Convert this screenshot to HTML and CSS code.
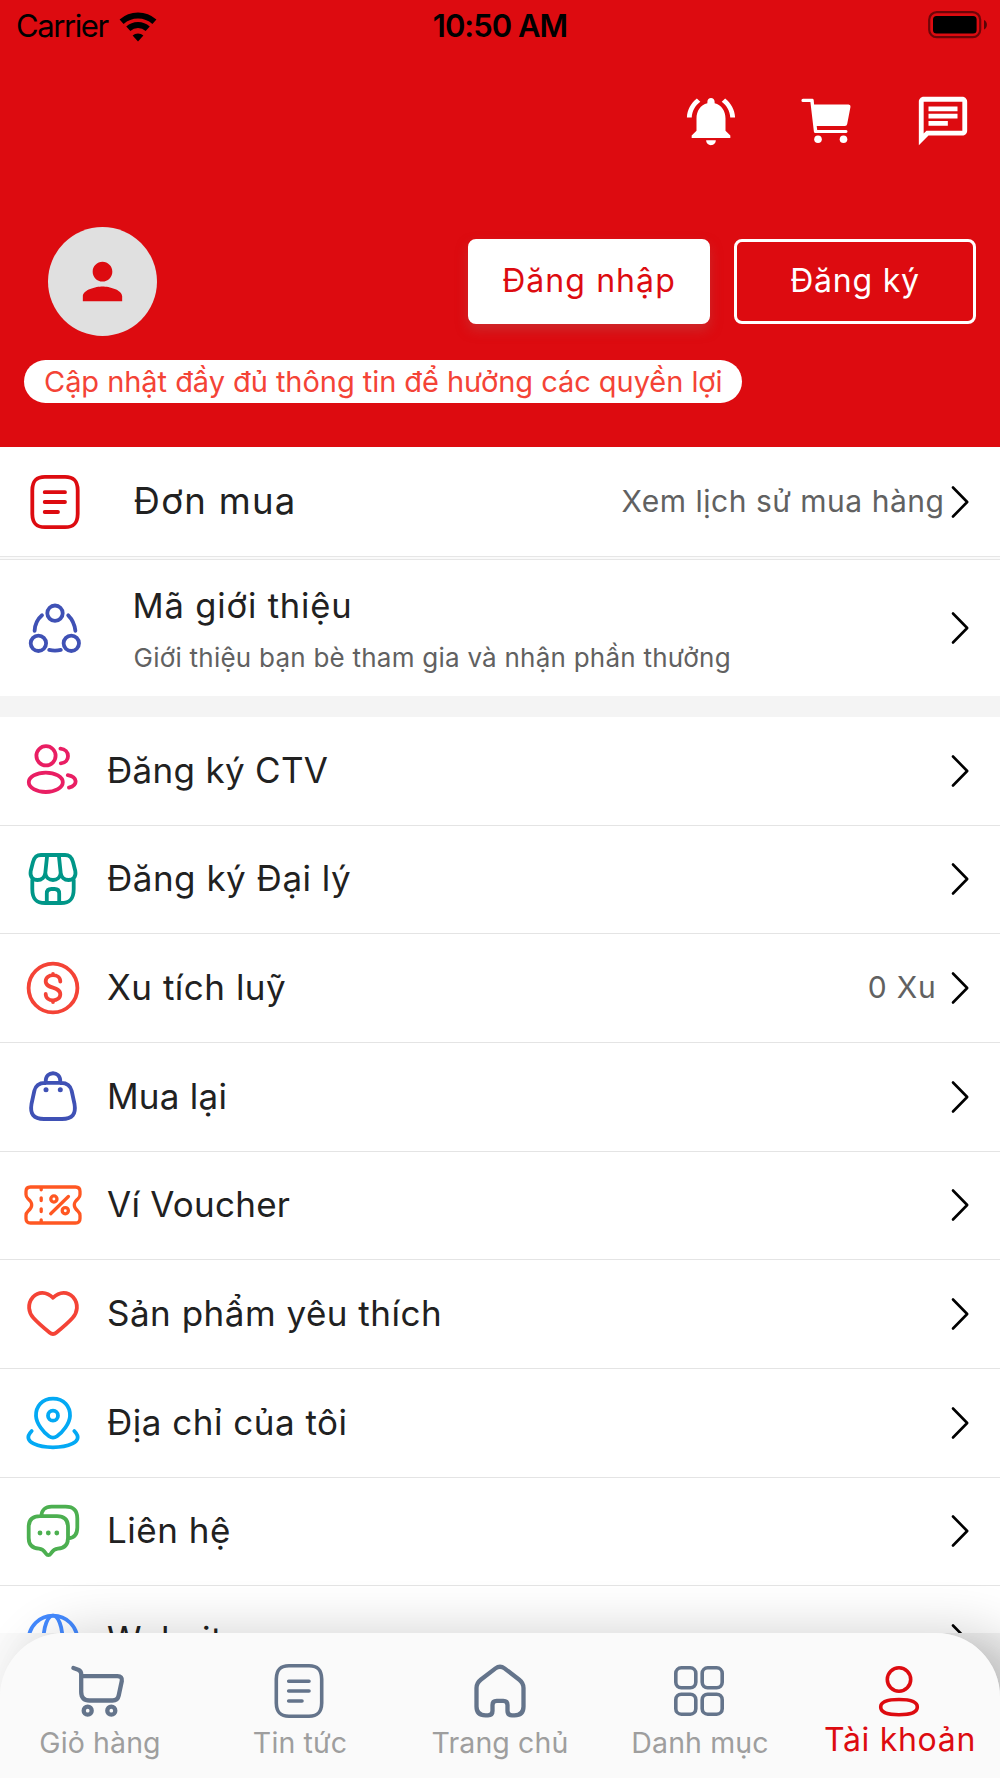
FILE: index.html
```html
<!DOCTYPE html>
<html lang="vi">
<head>
<meta charset="utf-8">
<title>Tài khoản</title>
<link rel="stylesheet" href="styles.css">
</head>
<body>
<svg class="defs" aria-hidden="true">
  <symbol id="chevron" viewBox="0 0 20 34"><path d="M3 2.5 17.2 17 3 31.5"/></symbol>
  <symbol id="doc" viewBox="-30 -30 60 60"><path d="M-10-25.2H10C20-25.2 22.5-20 22.7-12V12C22.5 20 20 25.2 10 25.2H-10C-20 25.2-22.5 20-22.7 12V-12C-22.5-20-20-25.2-10-25.2ZM-10.3-9.8H10M-10.3 0H10M-10.3 10H3"/></symbol>
</svg>
<main class="screen">
  <header class="header">
    <div class="status">
      <div class="carrier"><span>Carrier</span>
        <svg width="38" height="32" viewBox="0 0 38 32"><g fill="none" stroke="#000" stroke-width="6"><path d="M2.6 10.8A24.5 24.5 0 0 1 35.4 10.8"/><path d="M9.3 17.8A14.2 14.2 0 0 1 28.7 17.8"/></g><path d="M13.6 24.6A7.8 7.8 0 0 1 24.4 24.6L19 30.4Z"/></svg>
      </div>
      <div class="clock">10:50 AM</div>
      <svg class="battery" width="60" height="30" viewBox="0 0 60 30"><rect x="1.2" y="2.2" width="51" height="25" rx="7.5" fill="none" stroke="#000" stroke-opacity=".5" stroke-width="2.2"/><rect x="5" y="6" width="43.6" height="17.6" rx="3.5"/><path d="M56 10a5.4 5.4 0 0 1 0 9.6Z" fill-opacity=".6"/></svg>
    </div>
    <div class="actions">
      <svg width="58" height="58" viewBox="0 0 24 24"><path d="M7.58 4.08 6.15 2.65C3.75 4.48 2.17 7.3 2.03 10.5h2c.15-2.65 1.51-4.97 3.55-6.42zm12.39 6.42h2c-.15-3.2-1.73-6.02-4.12-7.85l-1.42 1.43c2.02 1.45 3.39 3.77 3.54 6.42zM18 11c0-3.07-1.64-5.64-4.5-6.32V4c0-.83-.67-1.5-1.5-1.5s-1.5.67-1.5 1.5v.68C7.63 5.36 6 7.92 6 11v5l-2 2v1h16v-1l-2-2v-5zm-6 11c.14 0 .27-.01.4-.04.65-.14 1.18-.58 1.44-1.18.1-.24.15-.5.15-.78h-4c.01 1.1.9 2 2.01 2z"/></svg>
      <svg class="basket" width="58" height="58" viewBox="-29 -29 58 58"><path d="M-23-22.3H-13.6Q-12.6-22.3-12.3-21L-11.9-16.6H22.6Q24.8-16.4 24.5-14.2L21.2 3Q20.9 4.9 18.9 4.9H-9.3L-8.8 8.9H20.2Q21.5 9.1 21.5 10.5T20.2 12.1H-10.7Q-11.9 12.1-12.1 10.7L-15.6-18.9H-23Q-24.6-19.1-24.6-20.6T-23-22.3Z"/><circle cx="-8" cy="18.2" r="3.8"/><circle cx="17.5" cy="18.2" r="3.8"/></svg>
      <svg width="58" height="58" viewBox="0 0 24 24"><path d="M20 2H4c-1.1 0-2 .9-2 2v18l4-4h14c1.1 0 2-.9 2-2V4c0-1.1-.9-2-2-2zm0 14H5.17L4 17.17V4h16v12zM6 12h8v2H6v-2zm0-3h12v2H6V9zm0-3h12v2H6V6z"/></svg>
    </div>
    <div class="account">
      <div class="avatar"><svg width="59" height="59" viewBox="0 0 24 24"><path d="M12 12c2.21 0 4-1.79 4-4s-1.79-4-4-4-4 1.79-4 4 1.79 4 4 4zm0 2c-2.67 0-8 1.34-8 4v2h16v-2c0-2.66-5.33-4-8-4z"/></svg></div>
      <button class="btn login">Đăng nhập</button>
      <button class="btn register">Đăng ký</button>
    </div>
    <div class="notice">Cập nhật đầy đủ thông tin để hưởng các quyền lợi</div>
  </header>

  <section class="orders">
    <svg class="icon red"><use href="#doc"/></svg>
    <span class="title wide">Đơn mua</span>
    <span class="hint">Xem lịch sử mua hàng</span>
    <svg class="chev"><use href="#chevron"/></svg>
  </section>
  <section class="referral">
    <svg class="icon indigo" viewBox="-30 -30 60 60"><circle cx="0" cy="-14.8" r="7.7"/><circle cx="-16.6" cy="15.3" r="7.7"/><circle cx="16.3" cy="15.3" r="7.7"/><path d="M-13-12.7Q-19.8-7-20.4 2.8M13.2-12.7Q19.4-6.5 20.4 2.8M-5.8 21.9Q0 23.2 5.8 21.9"/></svg>
    <div class="stack"><span class="title mid">Mã giới thiệu</span><span class="sub">Giới thiệu bạn bè tham gia và nhận phần thưởng</span></div>
    <svg class="chev"><use href="#chevron"/></svg>
  </section>

  <section class="menu">
    <div class="row"><svg class="icon" stroke="#e91e63" viewBox="-30 -30 60 60"><circle cx="-7" cy="-15.2" r="9.6"/><ellipse cx="-7.2" cy="11.3" rx="17" ry="9.7"/><path d="M7.4-22.3C17.2-21.5 17.7-8.7 7.8-7.6M14.8 4.2C24.5 6 25.4 13.8 16 16.6"/></svg><span class="title t1">Đăng ký CTV</span><svg class="chev"><use href="#chevron"/></svg></div>
    <div class="row"><svg class="icon" stroke="#009688" viewBox="-30 -30 60 60"><path d="M-12-24H12C17-24 18.7-21.5 20-17L22.3-8C23.4-2 20 1 15.5 1 11.2 1 8.2-2 7.7-6 7.4-1.8 4 1 0 1S-7.4-1.8-7.7-6C-8.2-2-11.2 1-15.5 1-20 1-23.4-2-22.3-8L-20-17C-18.7-21.5-17-24-12-24ZM-5.8-24-7.7-6M5.8-24 7.7-6M-20.7 1V10C-20.7 20-17 24-8 24H8C17 24 20.7 20 20.7 10V1M-6.2 24V14.5Q-6.2 10-1.5 10H1.5Q6.2 10 6.2 14.5V24"/></svg><span class="title t2">Đăng ký Đại lý</span><svg class="chev"><use href="#chevron"/></svg></div>
    <div class="row"><svg class="icon" stroke="#f44336" viewBox="-30 -30 60 60"><circle r="24.4"/><path d="M7.3-6.5C7.3-15-7.3-14.8-7.3-6.7-7.3 1.5 7.3-2.2 7.3 6.2 7.3 14.4-7.3 14.4-7.3 6M0-12.8V-14M0 12.5V14"/></svg><span class="title t2">Xu tích luỹ</span><span class="hint coins">0 Xu</span><svg class="chev"><use href="#chevron"/></svg></div>
    <div class="row"><svg class="icon" stroke="#3f51b5" viewBox="-30 -30 60 60"><path d="M-8-14.2H8C14.5-14.2 17.5-11.5 18.7-6L21.5 7C23.2 17 19.5 22 9 22H-9C-19.5 22-23.2 17-21.5 7L-18.7-6C-17.5-11.5-14.5-14.2-8-14.2ZM-7.3-14V-15.8C-7.3-26.4 7.3-26.4 7.3-15.8V-14"/><g fill="#3f51b5" stroke="none"><circle cx="-7" cy="-7.3" r="2.5"/><circle cx="7.3" cy="-7.3" r="2.5"/></g></svg><span class="title t3">Mua lại</span><svg class="chev"><use href="#chevron"/></svg></div>
    <div class="row"><svg class="icon ticket" stroke="#ff5722" viewBox="-30 -30 60 60"><path d="M-22.5-18H22.5Q27-18 27-13.5V-10.5Q27-8 25-6.2 17.6 0 25 6.2 27 8 27 10.5V13.5Q27 18 22.5 18H-22.5Q-27 18-27 13.5V10.5Q-27 8-25 6.2-17.6 0-25-6.2-27-8-27-10.5V-13.5Q-27-18-22.5-18ZM-11.8-18V-15.2M-11.8-7.2V-4.5M-11.8 3.8V6.5M-11.8 15V18M-2.3 8.7 15.4-8.5"/><circle cx=".9" cy="-6" r="3.1"/><circle cx="12.3" cy="5.7" r="3.1"/></svg><span class="title t3">Ví Voucher</span><svg class="chev"><use href="#chevron"/></svg></div>
    <div class="row"><svg class="icon" stroke="#f44336" viewBox="-30 -30 60 60"><path d="M0-16.2C-6.5-23-15-22.5-20-17-26-10-24.5-1.5-19.5 4-14.5 9.5-9 14-3.5 18.5-1.2 20.5 1.2 20.5 3.5 18.5 9 14 14.5 9.5 19.5 4 24.5-1.5 26-10 20-17 15-22.5 6.5-23 0-16.2Z"/></svg><span class="title t2">Sản phẩm yêu thích</span><svg class="chev"><use href="#chevron"/></svg></div>
    <div class="row"><svg class="icon" stroke="#03a9f4" viewBox="-30 -30 60 60"><path d="M0-24.3C11-24.3 17.3-16.5 17-7 16.7.5 9.5 9.5 4 13.3 1.2 15.2-1.2 15.2-4 13.3-9.5 9.5-16.7.5-17-7-17.3-16.5-11-24.3 0-24.3ZM-21.3 8C-33 20-11.5 24.3 0 24.3S33 20 21.3 8"/><circle cy="-7.3" r="5"/></svg><span class="title t2">Địa chỉ của tôi</span><svg class="chev"><use href="#chevron"/></svg></div>
    <div class="row"><svg class="icon" stroke="#4caf50" viewBox="-30 -30 60 60"><path d="M-11.5-15C-11.5-21-7.5-24.3-1.5-24.3H12.5C20.5-24.3 24.3-20.5 24.3-12.5V-3.5C24.3 3.5 21.5 6.8 15.5 7.3M-13-14.8H4C11.5-14.8 15-11.3 15-4V7C15 14.2 11.5 17.3 4.8 17.6 1 17.9-.5 20-2 22.3-3.8 24.7-5.5 24.7-7.2 22.3-8.7 20-10 17.9-14 17.6-21 17.3-24.3 14-24.3 7V-4C-24.3-11.3-20.5-14.8-13-14.8Z"/><g fill="#4caf50" stroke="none"><circle cx="-13" cy="2" r="2.4"/><circle cx="-4.7" cy="2" r="2.4"/><circle cx="3.8" cy="2" r="2.4"/></g></svg><span class="title t2">Liên hệ</span><svg class="chev"><use href="#chevron"/></svg></div>
    <div class="row"><svg class="icon" stroke="#448aff" viewBox="-30 -30 60 60"><circle r="24.4"/><ellipse rx="9.5" ry="24.4"/><path d="M-24.4 0H24.4"/></svg><span class="title t2">Website</span><svg class="chev"><use href="#chevron"/></svg></div>
  </section>

  <footer class="dock">
    <div class="dock-clip">
      <nav class="tabs">
        <a class="tab"><svg class="nicon" viewBox="-30 -30 60 60"><path d="M-25.6-23-20.8-21.3Q-17.8-20-17.8-17V1Q-17.8 9.5-9.5 9.5H13.5Q18.7 9.5 19.7 4.5L22.8-10Q23.5-14.8 18.5-14.8H-17.3"/><circle cx="-11.3" cy="19.7" r="4"/><circle cx="12.3" cy="19.7" r="4"/></svg><span>Giỏ hàng</span></a>
        <a class="tab"><svg class="nicon thin"><use href="#doc"/></svg><span>Tin tức</span></a>
        <a class="tab"><svg class="nicon home" viewBox="-30 -30 60 60"><path d="M-4.5-22.6Q0-26 4.5-22.6L19.3-11.3Q23.5-8 23.5-3V15.5Q23.5 24.3 14.5 24.3H12Q7.5 24.3 7.5 20V14Q7.5 9.8 3.3 9.8H-3.3Q-7.5 9.8-7.5 14V20Q-7.5 24.3-12 24.3H-14.5Q-23.5 24.3-23.5 15.5V-3Q-23.5-8-19.3-11.3Z"/></svg><span>Trang chủ</span></a>
        <a class="tab"><svg class="nicon thin" viewBox="-30 -30 60 60"><rect x="-23.2" y="-23.2" width="20" height="20" rx="5.5"/><rect x="3.2" y="-23.2" width="20" height="20" rx="5.5"/><rect x="-23.2" y="3.2" width="20" height="20" rx="5.5"/><rect x="3.2" y="3.2" width="20" height="20" rx="5.5"/></svg><span>Danh mục</span></a>
        <a class="tab active"><svg class="nicon" viewBox="-30 -30 60 60"><circle cy="-11.5" r="11.7"/><path d="M0 8.5C12 8.5 18.3 11 18.3 16S12 23.7 0 23.7-18.3 21-18.3 16-12 8.5 0 8.5Z"/></svg><span>Tài khoản</span></a>
      </nav>
    </div>
  </footer>
</main>
</body>
</html>
```
FILE: styles.css
```css
* { box-sizing: border-box; }
body {
  margin: 0;
  background: #fafafa;
  font-family: Inter, "Liberation Sans", sans-serif;
  color: #212121;
}
svg { flex: none; display: block; }
.defs { width: 0; height: 0; position: absolute; }

.screen {
  width: 1000px;
  height: 1778px;
  overflow: hidden;
  display: flex;
  flex-direction: column;
}

/* Header */
.header {
  flex: none;
  height: 447px;
  background: #dd0b10;
  display: flex;
  flex-direction: column;
}
.status {
  height: 53px;
  padding: 7px 12px 0 16px;
  display: grid;
  grid-template-columns: 1fr auto 1fr;
  font-size: 31px;
  line-height: 38px;
  color: #000;
}
.carrier { display: flex; gap: 11.5px; letter-spacing: -1.4px; }
.carrier svg { margin-top: 4px; }
.clock { font-weight: 600; letter-spacing: -1px; margin-right: 4px; }
.battery { justify-self: end; margin-top: 3px; }
.actions {
  height: 58px;
  margin-top: 39px;
  padding-right: 28px;
  display: flex;
  justify-content: flex-end;
  gap: 57px;
  fill: #fff;
}
.basket { margin-right: 2px; }
.account {
  height: 109px;
  margin-top: 77px;
  padding: 0 24px 0 48px;
  display: flex;
  align-items: center;
  gap: 24px;
}
.avatar {
  width: 109px;
  height: 109px;
  margin-right: auto;
  border-radius: 50%;
  background: #e0e0e0;
  fill: #dd0b10;
  display: grid;
  place-items: center;
}
.btn {
  width: 242px;
  height: 85px;
  margin-bottom: 1px;
  padding: 0;
  border: 3px solid #fff;
  border-radius: 8px;
  font: 400 32px/40px Inter, sans-serif;
}
.login {
  background: #fff;
  color: #dd0b10;
  letter-spacing: 1.08px;
  box-shadow: 0 6px 12px rgba(190, 70, 70, .5);
}
.register { background: none; color: #fff; letter-spacing: .8px; }
.notice {
  align-self: flex-start;
  width: 718px;
  height: 43px;
  margin: 24px 0 0 24px;
  padding-left: 20px;
  border-radius: 22px;
  background: #fff;
  color: #f44336;
  font-size: 29px;
  line-height: 43px;
  letter-spacing: -.05px;
  white-space: nowrap;
}

/* Rows */
.icon {
  width: 60px;
  height: 60px;
  fill: none;
  stroke-width: 3.8;
  stroke-linecap: round;
  stroke-linejoin: round;
}
.ticket { stroke-width: 3.3; }
.red { stroke: #dd0b10; }
.indigo { stroke: #3f51b5; }
.chev {
  width: 20px;
  height: 34px;
  margin-right: 30.5px;
  fill: none;
  stroke: #000;
  stroke-width: 2.6;
  stroke-linecap: round;
  stroke-linejoin: round;
}
.title { margin-right: auto; font-size: 35px; line-height: 44px; white-space: nowrap; }
.wide { font-size: 36.5px; letter-spacing: 1.3px; }
.mid { font-size: 34.5px; letter-spacing: .85px; }
.t1 { letter-spacing: .3px; }
.t2 { letter-spacing: .5px; }
.t3 { letter-spacing: .25px; }
.hint { padding-bottom: 2px; font-size: 30px; line-height: 40px; letter-spacing: .52px; color: #616161; }
.orders .hint { margin-right: 5px; }
.coins { margin-right: 13px; letter-spacing: .8px; }

.orders, .referral {
  flex: none;
  padding-left: 24.5px;
  display: flex;
  align-items: center;
  background: #fff;
}
.orders { height: 109px; }
.orders .title, .stack { margin-left: 49px; }
.orders .title, .row .title { padding-bottom: 2px; }
.referral {
  height: 137px;
  border-top: 1px solid #e6e6e6;
  box-shadow: 0 -2px #fafafa, 0 -3px #e6e6e6;
  margin-top: 3px;
}
.stack { display: flex; flex-direction: column; margin-right: auto; padding-top: 1px; }
.stack .title { line-height: 44px; margin-left: -1px; }
.sub { margin-top: 14px; font-size: 26px; line-height: 32px; letter-spacing: .24px; color: #616161; white-space: nowrap; }

.menu {
  flex: none;
  height: 937px;
  border-top: 21px solid #f4f4f4;
  overflow: hidden;
  background: #fff;
}
.row {
  height: 108.67px;
  padding-left: 23px;
  border-bottom: 1px solid #e4e4e4;
  display: flex;
  align-items: center;
}
.row .title { margin-left: 24px; }

/* Bottom tabs */
.dock, .tabs {
  height: 145px;
  border-radius: 64px 64px 0 0;
  box-shadow: 27px 0 53px rgba(0, 0, 0, .19);
}
.dock { flex: none; }
.dock-clip { overflow: hidden; }
.tabs {
  background: #fafafa;
  box-shadow: 27px 0 53px rgba(0, 0, 0, .09);
  display: grid;
  grid-template-columns: repeat(5, 1fr);
}
.tab {
  display: flex;
  flex-direction: column;
  align-items: center;
  padding-top: 28px;
  font-size: 28.5px;
  line-height: 36px;
  letter-spacing: .12px;
  color: #9e9e9e;
}
.tab span { margin-top: 4px; }
.nicon {
  width: 60px;
  height: 60px;
  margin-right: 2px;
  fill: none;
  stroke: #64748b;
  stroke-width: 4.3;
  stroke-linecap: round;
  stroke-linejoin: round;
}
.home { margin-right: 0; }
.thin { stroke-width: 3.6; }
.active { color: #dd0b10; font-size: 32px; letter-spacing: .69px; }
.active .nicon { stroke: #dd0b10; stroke-width: 3.6; }
.active span { margin-top: 1px; }
```
